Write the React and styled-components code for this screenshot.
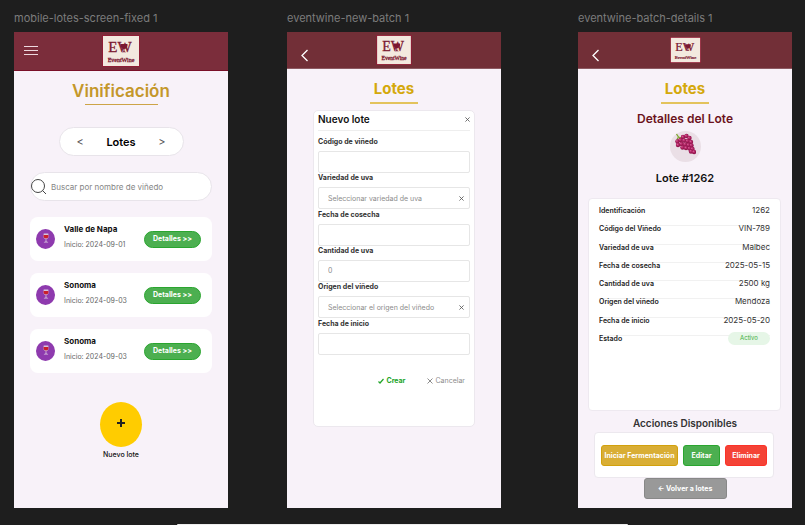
import React from "react";
import styled, { createGlobalStyle, css } from "styled-components";

const GlobalStyle = createGlobalStyle`
  *, *::before, *::after { box-sizing: border-box; }
  body { margin: 0; background: #1e1e1e; font-family: Inter, "Liberation Sans", sans-serif; }
  button, input, select { font: inherit; }
  h1, h2, h3, p, dl, dd, ul { margin: 0; padding: 0; }
`;

const Workspace = styled.main`
  display: flex;
  flex-direction: column;
  min-height: 100vh;
  overflow: hidden;
  background: #1e1e1e;
`;

const Boards = styled.div`
  flex: 1;
  display: flex;
  padding: 10px 13px 16px 14px;
`;

const Frame = styled.section`
  flex: 1;
  min-width: 0;
  display: flex;
  flex-direction: column;
  margin-left: ${(p) => p.$gap || 0}px;
`;

const FrameName = styled.p`
  height: 22px;
  line-height: 17px;
  font-size: 11px;
  color: #7c7c7c;
  white-space: nowrap;
`;

const Screen = styled.div`
  flex: 1;
  display: flex;
  flex-direction: column;
  align-items: center;
  background: #f8f2f9;
`;

const Header = styled.header`
  align-self: stretch;
  display: grid;
  grid-template-columns: 1fr auto 1fr;
  align-items: center;
  height: ${(p) => (p.$tall ? 39 : 37)}px;
  padding: 0 9px;
  background: ${(p) => (p.$tall ? "#7b2d3b" : "#722f37")};
  border-bottom: 1px solid ${(p) => (p.$tall ? "#7a1029" : "#8d5a62")};
`;

const HeaderButton = styled.button`
  justify-self: start;
  display: flex;
  padding: 0;
  margin: ${(p) => (p.$back ? "10px 0 0 4px" : "0 0 2px")};
  border: 0;
  background: none;
`;

const LogoBox = styled.svg`
  display: block;
  width: ${(p) => p.$w}px;
  height: ${(p) => p.$h}px;
`;

const Title = styled.h1`
  height: ${(p) => (p.$large ? 33 : 31)}px;
  margin-top: ${(p) => (p.$large ? 0 : 2)}px;
  padding-top: ${(p) => (p.$large ? 9 : 7)}px;
  line-height: 22px;
  font-size: ${(p) => (p.$large ? 17 : 15)}px;
  font-weight: ${(p) => (p.$large ? 600 : 700)};
  color: ${(p) => (p.$large ? "#c4972a" : "#d4a80c")};
  text-align: center;
`;

const TitleLine = styled.div`
  width: ${(p) => (p.$large ? 73 : 48)}px;
  height: ${(p) => (p.$large ? 1 : 2)}px;
  background: ${(p) => (p.$large ? "#cda447" : "#e3c35c")};
`;

const Switcher = styled.nav`
  display: flex;
  align-items: center;
  justify-content: space-between;
  width: 125px;
  height: 29px;
  margin-top: 22px;
  padding: 0 17px;
  border: 1px solid #e8e4ea;
  border-radius: 15px;
  background: #fff;
  font-size: 11px;
  font-weight: 600;
`;

const Arrow = styled.button`
  padding: 0;
  border: 0;
  background: none;
  font-size: 11px;
  font-weight: 400;
  color: #555;
`;

const ListArea = styled.div`
  align-self: stretch;
  display: flex;
  flex-direction: column;
  padding: 16px 16px 0;
`;

const Search = styled.label`
  display: flex;
  align-items: center;
  gap: 4px;
  height: 29px;
  border: 1px solid #e8e4ea;
  border-radius: 15px;
  background: #fff;
`;

const SearchInput = styled.input`
  flex: 1;
  min-width: 0;
  padding: 0;
  border: 0;
  outline: 0;
  background: none;
  font-size: 8px;
  &::placeholder { color: #858585; opacity: 1; }
`;

const Lots = styled.ul`
  display: flex;
  flex-direction: column;
  gap: 12px;
  margin-top: 16px;
  list-style: none;
`;

const Lot = styled.li`
  display: flex;
  align-items: center;
  height: 44px;
  padding: 0 11px 0 6px;
  border-radius: 8px;
  background: #fff;
`;

const LotIcon = styled.span`
  display: flex;
  align-items: center;
  justify-content: center;
  width: 19px;
  height: 20px;
  margin-right: 9px;
  padding-bottom: 3px;
  border-radius: 50%;
  background: #8e3aae;
`;

const LotText = styled.div`
  flex: 1;
  padding-bottom: 4px;
`;

const LotName = styled.h2`
  line-height: 15px;
  font-size: 8px;
  font-weight: 700;
  color: #111;
`;

const LotDate = styled.p`
  line-height: 15px;
  font-size: 7px;
  color: #666;
`;

const Details = styled.button`
  height: 17px;
  width: 57px;
  padding: 0;
  border: 1px solid #2aa52f;
  border-radius: 9px;
  background: #4caf50;
  font-size: 7px;
  line-height: 14px;
  font-weight: 700;
  color: #fff;
  white-space: nowrap;
`;

const AddButton = styled.button`
  display: flex;
  align-items: center;
  justify-content: center;
  width: 42px;
  height: 45px;
  margin-top: 29px;
  padding: 0 0 4px;
  border: 0;
  border-radius: 50%;
  background: #fc0;
`;

const AddLabel = styled.label`
  margin-top: 3px;
  line-height: 10px;
  font-size: 7px;
  font-weight: 500;
  color: #111;
`;

const Dialog = styled.form`
  align-self: stretch;
  height: 317px;
  margin: 6px 26px 0;
  padding: 0 4px;
  border: 1px solid #ece8ee;
  border-radius: 5px;
  background: #fff;
`;

const DialogHead = styled.div`
  display: flex;
  align-items: center;
  justify-content: space-between;
  height: 20px;
  padding-bottom: 3px;
  border-bottom: 1px solid #eee;
`;

const DialogTitle = styled.h2`
  font-size: 10px;
  line-height: 16px;
  font-weight: 600;
  color: #111;
`;

const Close = styled.button`
  display: flex;
  padding: 0;
  border: 0;
  background: none;
`;

const Fields = styled.div`
  display: flex;
  flex-direction: column;
  min-height: 218px;
  margin-top: 6px;
`;

const Field = styled.div`
  flex: 1;
  display: flex;
  flex-direction: column;
`;

const FieldLabel = styled.label`
  height: 14px;
  line-height: 9px;
  font-size: 7px;
  font-weight: 700;
  color: #333;
`;

const boxed = css`
  width: 100%;
  height: 22px;
  padding: 0 9px;
  border: 1px solid #e6e6e6;
  border-radius: 2px;
  background: #fff;
  font-size: 7px;
  color: #8c8c8c;
`;

const TextInput = styled.input`
  ${boxed}
  &::placeholder { color: #8c8c8c; opacity: 1; }
`;

const SelectBox = styled.div`
  ${boxed}
  display: flex;
  align-items: center;
  padding-right: 5px;
`;

const Select = styled.select`
  flex: 1;
  min-width: 0;
  padding: 0;
  border: 0;
  appearance: none;
  background: none;
  color: #8c8c8c;
`;

const DialogActions = styled.div`
  display: flex;
  justify-content: flex-end;
  gap: 22px;
  margin-top: 21px;
  padding-right: 5px;
`;

const TextButton = styled.button`
  display: flex;
  align-items: center;
  gap: 2px;
  padding: 0;
  border: 0;
  background: none;
  line-height: 10px;
  font-size: 7px;
  font-weight: ${(p) => (p.$primary ? 700 : 400)};
  color: ${(p) => (p.$primary ? "#22a52a" : "#8c8c8c")};
`;

const Subtitle = styled.h2`
  margin-top: 8px;
  line-height: 14px;
  font-size: 12px;
  font-weight: 600;
  color: #6b1220;
`;

const GrapeCircle = styled.div`
  display: flex;
  justify-content: center;
  width: 31px;
  height: 31px;
  margin-top: 5px;
  padding-top: 2px;
  border-radius: 50%;
  background: #eadfe6;
`;

const LotNumber = styled.h3`
  margin-top: 9px;
  line-height: 14px;
  font-size: 11px;
  font-weight: 600;
  color: #111;
`;

const Info = styled.dl`
  align-self: stretch;
  height: 213px;
  margin: 13px 11px 0 10px;
  padding: 3px 10px;
  border: 1px solid #eee9f0;
  border-radius: 4px;
  background: #fff;
`;

const InfoRows = styled.div`
  display: flex;
  flex-direction: column;
  height: 146px;
`;

const InfoRow = styled.div`
  flex: 1;
  display: flex;
  align-items: center;
  justify-content: space-between;
  background: linear-gradient(#f1f1f1, #f1f1f1) 0 5px / 100% 1px no-repeat;
  &:first-child { background: none; }
`;

const Term = styled.dt`
  font-size: 7px;
  line-height: 10px;
  font-weight: 600;
  color: #222;
`;

const Value = styled.dd`
  padding-bottom: ${(p) => (p.$badge ? 0 : 2)}px;
  font-size: 8px;
  line-height: 12px;
  color: #333;
`;

const Badge = styled.span`
  display: block;
  width: 42px;
  height: 13px;
  border-radius: 7px;
  background: #e6f6e7;
  font-size: 6px;
  line-height: 12px;
  text-align: center;
  color: #3cae40;
`;

const ActionsTitle = styled.h3`
  margin-top: 5px;
  line-height: 14px;
  font-size: 10px;
  font-weight: 600;
  color: #333;
`;

const Actions = styled.div`
  align-self: stretch;
  display: flex;
  align-items: center;
  gap: 5px;
  height: 46px;
  margin: 2px 18px 0 16px;
  padding: 0 6px;
  border: 1px solid #ece8ee;
  border-radius: 4px;
  background: #fff;
`;

const tones = {
  gold: ["#d9ae35", "#d2a10c"],
  green: ["#4caf50", "#2aa52f"],
  red: ["#f44336", "#fb3228"],
  gray: ["#999", "#888"],
};

const ActionButton = styled.button`
  flex: ${(p) => p.$grow || "none"};
  height: 21px;
  padding: 0;
  border: 1px solid ${(p) => tones[p.$tone][1]};
  border-radius: 3px;
  background: ${(p) => tones[p.$tone][0]};
  font-size: 7px;
  font-weight: 700;
  color: #fff;
  white-space: nowrap;
`;

const BackButton = styled(ActionButton)`
  width: 83px;
`;

const Dock = styled.div`
  align-self: center;
  width: 56%;
  height: 1px;
  border-radius: 8px 8px 0 0;
  background: #eee;
`;

function Logo({ w, h }) {
  return (
    <LogoBox $w={w} $h={h} viewBox="0 0 38 32" role="img" aria-label="EventWine">
      <rect width="38" height="32" fill="#8f1d35" />
      <rect x="1" y="1" width="36" height="30" fill="#f3e9df" />
      <g fill="#7b1730" stroke="#7b1730" strokeWidth=".3" fontFamily="'Liberation Serif', serif">
        <text x="18" y="17" fontSize="15" textAnchor="middle">EW</text>
        <text x="19" y="27" fontSize="6" textAnchor="middle">EventWine</text>
      </g>
      <path d="M18.500 9h7c.4 2.600-.8 4.600-3 5v2.300l1.800.9h-4.600l1.800-.9V14c-2.200-.4-3.400-2.400-3-5z" fill="#7b1730" />
    </LogoBox>
  );
}

function BackIcon() {
  return (
    <svg width="9" height="13" viewBox="0 0 9 13" fill="none" stroke="#fff" strokeWidth="1.300">
      <path d="M7.500 1 2 6.500 7.500 12" />
    </svg>
  );
}

function Cross({ size = 5, color = "#555" }) {
  return (
    <svg width={size} height={size} viewBox="0 0 6 6" fill="none" stroke={color} strokeWidth="1">
      <path d="M.5.5l5 5M5.500.5l-5 5" />
    </svg>
  );
}

function Glass() {
  return (
    <svg width="6" height="10" viewBox="0 0 6 10">
      <path d="M.7.5h4.600l.3 3C5.500 5 4.500 6 3.400 6.100v2.300l1.700.7v.5H.9v-.5l1.700-.7V6.100C1.500 6 .5 5 .4 3.500z" fill="#d7c3dd" />
      <path d="M.6 2h4.800l.1 1.500C5.300 4.800 4.400 5.500 3 5.500S.7 4.800.5 3.500z" fill="#c91f2c" />
    </svg>
  );
}

const berries = [
  [9, 4], [12.500, 3], [15.500, 5], [3.500, 8.500], [6.500, 7], [10, 7.500], [13.500, 8], [17, 9],
  [4, 12], [7.500, 11], [11, 11.500], [14.500, 12], [17.500, 12.500], [8.500, 14.500], [12, 15],
  [15.500, 15.500], [18.500, 16], [17, 18.500], [20, 19],
];

function Grapes() {
  return (
    <svg width="22" height="22" viewBox="0 0 22 22">
      <path d="M2.500 1l2 3 3 1M4.500 4L3 6.500" fill="none" stroke="#7ca52e" strokeWidth="1.300" />
      {berries.map(([x, y]) => (
        <g key={`${x}-${y}`}>
          <circle cx={x} cy={y} r="2.200" fill="#94174f" />
          <circle cx={x - 0.3} cy={y - 0.4} r="1.500" fill="#b92c6c" />
          <circle cx={x - 0.7} cy={y - 0.8} r=".5" fill="#e583b0" />
        </g>
      ))}
    </svg>
  );
}

const lots = [
  ["Valle de Napa", "2024-09-01"],
  ["Sonoma", "2024-09-03"],
  ["Sonoma", "2024-09-03"],
];

function LotsScreen() {
  return (
    <Screen>
      <Header $tall>
        <HeaderButton aria-label="Menú">
          <svg width="15" height="11" viewBox="0 0 15 11" stroke="#eed9df" strokeWidth="1">
            <path d="M1 1.500h14M1 5.500h14M1 9.500h14" />
          </svg>
        </HeaderButton>
        <Logo w={38} h={32} />
      </Header>
      <Title $large>Vinificación</Title>
      <TitleLine $large />
      <Switcher>
        <Arrow aria-label="Anterior">&lt;</Arrow>
        <span>Lotes</span>
        <Arrow aria-label="Siguiente">&gt;</Arrow>
      </Switcher>
      <ListArea>
        <Search>
          <svg width="16" height="17" viewBox="0 0 16 17" fill="none" stroke="#444" strokeWidth="1">
            <circle cx="7" cy="8" r="6.500" />
            <path d="M11.500 12.500l3.500 3.500" />
          </svg>
          <SearchInput aria-label="Buscar" placeholder="Buscar por nombre de viñedo" />
        </Search>
        <Lots>
          {lots.map(([name, date], i) => (
            <Lot key={i}>
              <LotIcon><Glass /></LotIcon>
              <LotText>
                <LotName>{name}</LotName>
                <LotDate>Inicio: {date}</LotDate>
              </LotText>
              <Details>Detalles &gt;&gt;</Details>
            </Lot>
          ))}
        </Lots>
      </ListArea>
      <AddButton id="add-lot">
        <svg width="8" height="8" viewBox="0 0 8 8" stroke="#222" strokeWidth="2">
          <path d="M0 4h8M4 0v8" />
        </svg>
      </AddButton>
      <AddLabel htmlFor="add-lot">Nuevo lote</AddLabel>
    </Screen>
  );
}

const fields = [
  { id: "codigo", label: "Código de viñedo" },
  { id: "variedad", label: "Variedad de uva", option: "Seleccionar variedad de uva" },
  { id: "cosecha", label: "Fecha de cosecha" },
  { id: "cantidad", label: "Cantidad de uva", placeholder: "0" },
  { id: "origen", label: "Origen del viñedo", option: "Seleccionar el origen del viñedo" },
  { id: "inicio", label: "Fecha de inicio" },
];

function NewLotScreen() {
  return (
    <Screen>
      <Header>
        <HeaderButton $back aria-label="Volver"><BackIcon /></HeaderButton>
        <Logo w={36} h={30} />
      </Header>
      <Title>Lotes</Title>
      <TitleLine />
      <Dialog>
        <DialogHead>
          <DialogTitle>Nuevo lote</DialogTitle>
          <Close type="button" aria-label="Cerrar"><Cross /></Close>
        </DialogHead>
        <Fields>
          {fields.map((f) => (
            <Field key={f.id}>
              <FieldLabel htmlFor={f.id}>{f.label}</FieldLabel>
              {f.option ? (
                <SelectBox>
                  <Select id={f.id}><option>{f.option}</option></Select>
                  <Close type="button" aria-label="Limpiar"><Cross /></Close>
                </SelectBox>
              ) : (
                <TextInput id={f.id} placeholder={f.placeholder} />
              )}
            </Field>
          ))}
        </Fields>
        <DialogActions>
          <TextButton type="button" $primary>
            <svg width="6" height="6" viewBox="0 0 6 6" fill="none" stroke="#22a52a" strokeWidth="1.200">
              <path d="M.5 3.500l1.500 1.500L5.500 1" />
            </svg>
            Crear
          </TextButton>
          <TextButton type="button">
            <Cross size={6} color="#8c8c8c" />
            Cancelar
          </TextButton>
        </DialogActions>
      </Dialog>
    </Screen>
  );
}

const info = [
  ["Identificación", "1262"],
  ["Código del Viñedo", "VIN-789"],
  ["Variedad de uva", "Malbec"],
  ["Fecha de cosecha", "2025-05-15"],
  ["Cantidad de uva", "2500 kg"],
  ["Origen del viñedo", "Mendoza"],
  ["Fecha de inicio", "2025-05-20"],
];

function LotDetailsScreen() {
  return (
    <Screen>
      <Header>
        <HeaderButton $back aria-label="Volver"><BackIcon /></HeaderButton>
        <Logo w={31} h={26} />
      </Header>
      <Title>Lotes</Title>
      <TitleLine />
      <Subtitle>Detalles del Lote</Subtitle>
      <GrapeCircle><Grapes /></GrapeCircle>
      <LotNumber>Lote #1262</LotNumber>
      <Info>
        <InfoRows>
          {info.map(([term, value]) => (
            <InfoRow key={term}>
              <Term>{term}</Term>
              <Value>{value}</Value>
            </InfoRow>
          ))}
          <InfoRow>
            <Term>Estado</Term>
            <Value $badge><Badge>Activo</Badge></Value>
          </InfoRow>
        </InfoRows>
      </Info>
      <ActionsTitle>Acciones Disponibles</ActionsTitle>
      <Actions>
        <ActionButton $tone="gold" $grow="79 1 0">Iniciar Fermentación</ActionButton>
        <ActionButton $tone="green" $grow="37 1 0">Editar</ActionButton>
        <ActionButton $tone="red" $grow="42 1 0">Eliminar</ActionButton>
      </Actions>
      <BackButton $tone="gray">← Volver a lotes</BackButton>
    </Screen>
  );
}

export default function App() {
  return (
    <>
      <GlobalStyle />
      <Workspace>
        <Boards>
          <Frame>
            <FrameName>mobile-lotes-screen-fixed 1</FrameName>
            <LotsScreen />
          </Frame>
          <Frame $gap={59}>
            <FrameName>eventwine-new-batch 1</FrameName>
            <NewLotScreen />
          </Frame>
          <Frame $gap={77}>
            <FrameName>eventwine-batch-details 1</FrameName>
            <LotDetailsScreen />
          </Frame>
        </Boards>
        <Dock />
      </Workspace>
    </>
  );
}
